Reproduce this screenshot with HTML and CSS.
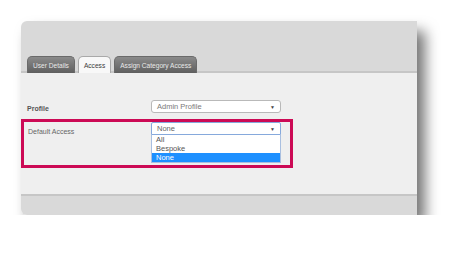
FILE: index.html
```html
<!DOCTYPE html>
<html lang="en">

<head>
    <meta charset="UTF-8">
    <meta name="viewport" content="width=device-width, initial-scale=1.0">
    <title>User Access</title>
    <link rel="stylesheet" href="styles.css">
</head>

<body>
    <div class="window">
        <div class="header">
            <div class="tabs">
                <div class="tab">User Details</div>
                <div class="tab active">Access</div>
                <div class="tab">Assign Category Access</div>
            </div>
        </div>

        <div class="content">
            <div class="form-row">
                <div class="label bold">Profile</div>
                <div class="select">
                    <span>Admin Profile</span>
                    <span class="arrow">&#9660;</span>
                </div>
            </div>

            <div class="form-row highlight">
                <div class="label">Default Access</div>
                <div class="select-wrap">
                    <div class="select open">
                        <span>None</span>
                        <span class="arrow">&#9660;</span>
                    </div>
                    <ul class="options">
                        <li>All</li>
                        <li>Bespoke</li>
                        <li class="selected">None</li>
                    </ul>
                </div>
            </div>
        </div>

        <div class="footer"></div>
    </div>
</body>

</html>
```

FILE: styles.css
```css
body {
    margin: 0;
    background-color: #ffffff;
    font-family: 'Liberation Sans', Arial, sans-serif;
}

.window {
    margin: 21px 0 0 21px;
    width: 396px;
    height: 194px;
    display: flex;
    flex-direction: column;
    border-radius: 6px 0 0 6px;
    overflow: hidden;
    box-shadow: 8px 10px 14px rgba(0, 0, 0, 0.55);
}

.header {
    height: 50px;
    background-color: #d9d9d9;
    border-bottom: 2px solid #c6c6c6;
    display: flex;
    align-items: flex-end;
}

.tabs {
    display: flex;
    align-items: flex-end;
    gap: 3px;
    padding-left: 6px;
    margin-bottom: -2px;
}

.tab {
    height: 17px;
    line-height: 17px;
    padding: 0 5px;
    font-size: 6.6px;
    color: #e9e9e9;
    background: linear-gradient(#8a8a8a, #5f5f5f);
    border: 1px solid #6a6a6a;
    border-bottom: none;
    border-radius: 5px 5px 0 0;
    box-sizing: border-box;
}

.tab.active {
    background: #f8f8f8;
    color: #3a3a3a;
    border-color: #a9a9a9;
}

.content {
    height: 121px;
    background-color: #efefef;
    padding-top: 27px;
    box-sizing: border-box;
}

.form-row {
    display: flex;
    align-items: center;
}

.form-row .label {
    width: 124px;
    padding-left: 6px;
    padding-top: 3px;
    font-size: 7px;
    color: #666666;
}

.form-row .label.bold {
    font-weight: bold;
    color: #555555;
}

.highlight {
    width: 272px;
    margin-top: 6px;
    border: 3px solid #cc0a55;
    box-sizing: border-box;
    align-items: flex-start;
    padding-bottom: 2px;
}

.highlight .label {
    width: 123px;
    padding-left: 4px;
    padding-top: 6px;
}

.select {
    width: 130px;
    height: 13px;
    box-sizing: border-box;
    background-color: #ffffff;
    border: 1px solid #b9b9b9;
    border-radius: 3px;
    display: flex;
    align-items: center;
    justify-content: space-between;
    padding: 0 5px;
    font-size: 7.5px;
    color: #7a7a7a;
}

.select .arrow {
    font-size: 5px;
    color: #444444;
}

.select.open {
    border-color: #86a9dc;
    border-radius: 2px 2px 0 0;
    color: #666666;
}

.options {
    list-style: none;
    margin: 0;
    padding: 0;
    width: 130px;
    box-sizing: border-box;
    background-color: #ffffff;
    border: 1px solid #a9bfe0;
    border-top: none;
    font-size: 7.5px;
    color: #555555;
}

.options li {
    height: 9px;
    line-height: 9px;
    padding-left: 4px;
}

.options li.selected {
    background-color: #1e90ff;
    color: #ffffff;
}

.footer {
    flex: 1;
    background-color: #d9d9d9;
    border-top: 2px solid #c6c6c6;
}
```
